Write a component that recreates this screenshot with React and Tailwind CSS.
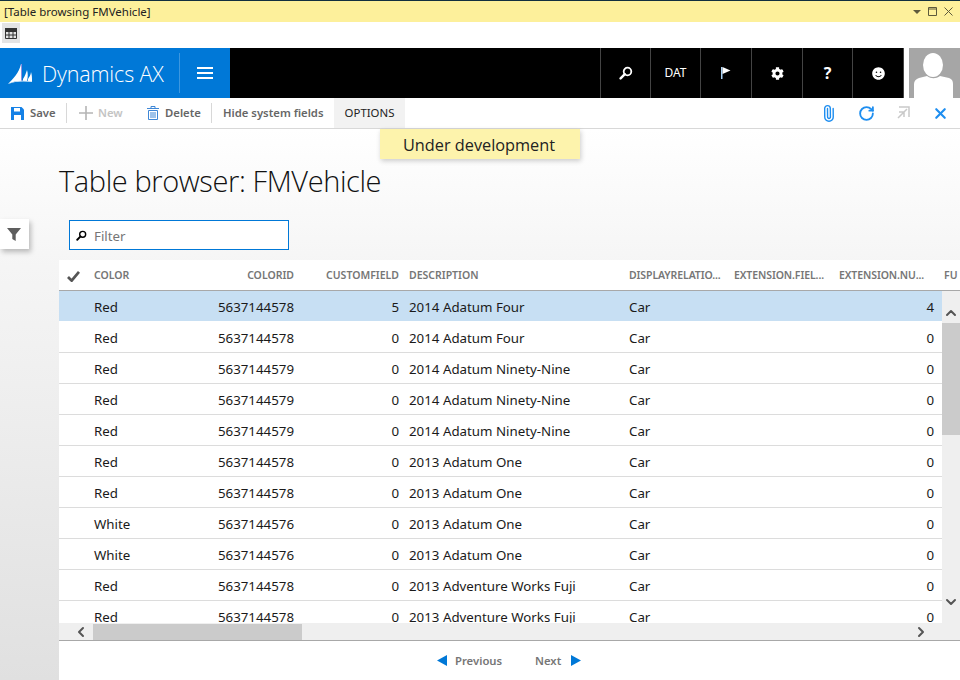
import React from "react";
import { Paperclip, RotateCw, X, ChevronUp, ChevronDown, ChevronLeft, ChevronRight } from "lucide-react";
import { FaCog, FaSmile } from "react-icons/fa";

const rows = [
  ["Red", "5637144578", "5", "2014 Adatum Four", "4"],
  ["Red", "5637144578", "0", "2014 Adatum Four", "0"],
  ["Red", "5637144579", "0", "2014 Adatum Ninety-Nine", "0"],
  ["Red", "5637144579", "0", "2014 Adatum Ninety-Nine", "0"],
  ["Red", "5637144579", "0", "2014 Adatum Ninety-Nine", "0"],
  ["Red", "5637144578", "0", "2013 Adatum One", "0"],
  ["Red", "5637144578", "0", "2013 Adatum One", "0"],
  ["White", "5637144576", "0", "2013 Adatum One", "0"],
  ["White", "5637144576", "0", "2013 Adatum One", "0"],
  ["Red", "5637144578", "0", "2013 Adventure Works Fuji", "0"],
  ["Red", "5637144578", "0", "2013 Adventure Works Fuji", "0"],
];

const Magnifier = ({ className }) => (
  <svg viewBox="0 0 14 14" className={className} fill="none" stroke="currentColor">
    <circle cx="8.5" cy="5.5" r="3.8" strokeWidth="1.8" />
    <path d="M5.8 8.2 1.6 12.4" strokeWidth="2.4" strokeLinecap="round" />
  </svg>
);

const NavCell = ({ width, children }) => (
  <div className={`${width} h-full flex items-center justify-center border-l border-[#444] text-white`}>
    {children}
  </div>
);

const App = () => {
  return (
    <div className="w-[960px] h-[680px] overflow-hidden relative flex flex-col bg-white text-[13.3px] text-[#1a1a1a] font-['Noto_Sans',sans-serif]">
      {/* Window title */}
      <div className="h-[22px] shrink-0 border-t border-[#12303f] bg-[#fdf09b] flex items-center justify-between pl-[4px] pr-[7px] text-[11.5px] text-[#222]">
        <span>[Table browsing FMVehicle]</span>
        <div className="flex items-center gap-[7px] text-[#5d5a3c]">
          <svg viewBox="0 0 8 4" className="w-[8px] h-[4px]"><path d="M0 0h8L4 4z" fill="currentColor" /></svg>
          <svg viewBox="0 0 9 9" className="w-[9px] h-[9px]" fill="none" stroke="currentColor"><path d="M.5.5h8v8h-8zM.5 2h8" /></svg>
          <svg viewBox="0 0 9 9" className="w-[9px] h-[9px]" fill="none" stroke="currentColor"><path d="M.5.5l8 8M8.5.5l-8 8" /></svg>
        </div>
      </div>

      {/* Small toolbar */}
      <div className="h-[26px] shrink-0 flex items-start">
        <div className="w-[18px] h-[20px] mt-px ml-[2px] bg-[#e4e4e4] flex items-center justify-center">
          <svg viewBox="0 0 12 11" className="w-[12px] h-[11px]" fill="none" stroke="#333"><path d="M.5.5h11v10H.5zM.5 3.5h11M.5 7h11M4 .5v10M8 .5v10" /><path d="M0 0h12v3H0z" fill="#333" stroke="none" /></svg>
        </div>
      </div>

      {/* Dynamics nav */}
      <div className="h-[50px] shrink-0 bg-black flex">
        <div className="w-[230px] bg-[#0078d7] flex items-center text-white">
          <svg viewBox="0 0 24 20" className="w-[24px] h-[20px] ml-[8px] mt-[2px]">
            <path d="M0 20C5 15 11 9 13 0v17C8 17 4 18 0 20z" fill="#fff" />
            <path d="M13 0h1v17h-1z" fill="#8d8fe0" />
            <path d="M15 15c2-3 3-6 4-9 1 3 1 7 0 11h-4z" fill="#fff" />
            <path d="M20 15c1-2 3-4 3-7 1 3 1 6 1 9h-4z" fill="#fff" />
            <path d="M0 20c7-4 16-4 24-3v1c-8-1-17-1-24 2z" fill="#d6e8f8" />
          </svg>
          <span className="ml-[10px] w-[122px] pt-[2px] whitespace-nowrap text-[21.5px] font-light font-['Open_Sans',sans-serif] tracking-[-0.15px]">Dynamics AX</span>
          <div className="w-px h-[40px] bg-[#3c97e0] ml-[15px]" />
          <div className="ml-[17px] flex flex-col gap-[3px]">
            <div className="w-[16px] h-[2px] bg-white" />
            <div className="w-[16px] h-[2px] bg-white" />
            <div className="w-[16px] h-[2px] bg-white" />
          </div>
        </div>
        <div className="flex-1" />
        <NavCell width="w-[50px]"><Magnifier className="w-[14px] h-[14px]" /></NavCell>
        <NavCell width="w-[50px]"><span className="text-[12px]">DAT</span></NavCell>
        <NavCell width="w-[51px]">
          <svg viewBox="0 0 10 12" className="w-[10px] h-[12px]"><path d="M0 0h1.5v12H0z" fill="#a9d2f5" /><path d="M1.5 0 9.5 3.5 1.5 7z" fill="#fff" /></svg>
        </NavCell>
        <NavCell width="w-[51px]"><FaCog className="w-[13px] h-[13px]" /></NavCell>
        <NavCell width="w-[50px]"><span className="text-[16px] leading-none font-bold">?</span></NavCell>
        <NavCell width="w-[51px]"><FaSmile className="w-[13px] h-[13px]" /></NavCell>
        <div className="w-[6px] bg-white border-l border-[#444]" />
        <div className="w-[51px] bg-[#a6a6a6] overflow-hidden">
          <svg viewBox="0 0 51 50" className="w-[51px] h-[50px]" fill="#fff">
            <ellipse cx="24" cy="17" rx="10" ry="12" />
            <path d="M5 50V36c0-3 2-5 5-6l8-2c4 3 9 3 13 0l9 2c3 1 4 3 4 6v14z" />
          </svg>
        </div>
      </div>

      {/* Action bar */}
      <div className="h-[31px] shrink-0 border-b border-[#d8d8d8] flex items-center font-semibold text-[11.3px] text-[#666]">
        <svg viewBox="0 0 13 13" className="w-[13px] h-[13px] ml-[11px]">
          <path d="M0 0h10.5L13 2.5V13H0z" fill="#1581e6" />
          <path d="M3 1h6v3.5H3z" fill="#fff" />
          <path d="M3 8h7v5H3z" fill="#fff" />
        </svg>
        <span className="ml-[6px] w-[26px]">Save</span>
        <div className="w-px h-[20px] bg-[#d8d8d8] ml-[10px]" />
        <svg viewBox="0 0 14 14" className="w-[14px] h-[14px] ml-[12px]"><path d="M6.2 0h1.6v6.2H14v1.6H7.8V14H6.2V7.8H0V6.2h6.2z" fill="#b5b5b5" /></svg>
        <span className="ml-[5px] w-[25px] text-[#c4c4c4]">New</span>
        <svg viewBox="0 0 12 14" className="w-[12px] h-[14px] ml-[24px]" fill="none" stroke="#3f87d6">
          <path d="M0 2.5h12M4 2.5V.5h4v2M1.5 4.5h9v9h-9zM4 6v6M6 6v6M8 6v6" />
        </svg>
        <span className="ml-[6px] w-[35px]">Delete</span>
        <div className="w-px h-[20px] bg-[#d8d8d8] ml-[11px]" />
        <span className="ml-[11px] w-[100px] whitespace-nowrap">Hide system fields</span>
        <div className="ml-[11px] w-[71px] h-full bg-[#f2f2f2] flex items-center justify-center font-normal text-[11.4px] text-[#222]">OPTIONS</div>
        <div className="flex-1" />
        <div className="flex items-center text-[#1e8ef0]">
          <Paperclip className="w-[17px] h-[17px] mr-[21px] -rotate-45" strokeWidth={2} />
          <RotateCw className="w-[17px] h-[17px] mr-[21px]" strokeWidth={2.6} />
          <svg viewBox="0 0 14 14" className="w-[14px] h-[14px] mr-[22px]" fill="none" stroke="#c9c9c9" strokeWidth="1.5">
            <path d="M3 1h10v10M11 3 2 12M3 6h5v5" />
          </svg>
          <X className="w-[17px] h-[17px] mr-[11px]" strokeWidth={3} />
        </div>
      </div>

      {/* Page body */}
      <div className="flex-1 min-h-0 flex bg-[linear-gradient(to_bottom,#ffffff,#f5f5f5_25%,#e0e0e0)]">
        {/* Left rail */}
        <div className="w-[59px] shrink-0 pt-[90px]">
          <div className="w-[29px] h-[30px] pr-[2px] bg-white shadow-[2px_3px_5px_rgba(0,0,0,0.25)] flex items-center justify-center">
            <svg viewBox="0 0 14 13" className="w-[14px] h-[13px]"><path d="M0 0h14L8.7 6.5V13L5.3 11V6.5z" fill="#5e5e5e" /></svg>
          </div>
        </div>

        <div className="flex-1 min-w-0 flex flex-col">
          <h1 className="h-[91px] pt-[30px] text-[29px] leading-[44px] font-light font-['Open_Sans',sans-serif] text-[#111] tracking-[-0.4px]">Table browser: FMVehicle</h1>

          <div className="ml-[10px] w-[220px] h-[30px] border border-[#0078d7] bg-white flex items-center pl-[6px] pt-[3px] gap-[7px] text-[#767676]">
            <Magnifier className="w-[11px] h-[11px] text-black -mt-[3px]" />
            <span>Filter</span>
          </div>

          {/* Grid header */}
          <div className="mt-[10px] h-[31px] shrink-0 bg-white border-b border-[#a8a8a8] flex items-center pt-[2px] font-semibold text-[10.5px] text-[#767676] whitespace-nowrap overflow-hidden">
            <div className="w-[35px] shrink-0 pl-[8px]">
              <svg viewBox="0 0 14 12" className="w-[13px] h-[11px]" fill="none" stroke="#555" strokeWidth="3"><path d="M1 6.5 5 10.5 13 1" /></svg>
            </div>
            <div className="w-[100px] shrink-0">COLOR</div>
            <div className="w-[100px] shrink-0 text-right">COLORID</div>
            <div className="w-[105px] shrink-0 text-right">CUSTOMFIELD</div>
            <div className="w-[220px] shrink-0 ml-[10px]">DESCRIPTION</div>
            <div className="w-[105px] shrink-0 tracking-[-0.1px]">DISPLAYRELATIO...</div>
            <div className="w-[105px] shrink-0 tracking-[-0.1px]">EXTENSION.FIEL...</div>
            <div className="w-[105px] shrink-0 tracking-[-0.1px]">EXTENSION.NU...</div>
            <div className="shrink-0">FU</div>
          </div>

          {/* Grid rows and vertical scrollbar */}
          <div className="h-[332px] shrink-0 flex bg-white">
            <div className="flex-1 min-w-0 overflow-hidden">
              {rows.map((row, i) => (
                <div
                  key={i}
                  className={`h-[31px] flex items-center pt-[3px] border-b whitespace-nowrap ${i === 0 ? "bg-[#c7dff3] border-white" : "border-[#dcdcdc]"}`}
                >
                  <div className="w-[35px] shrink-0" />
                  <div className="w-[100px] shrink-0">{row[0]}</div>
                  <div className="w-[100px] shrink-0 text-right">{row[1]}</div>
                  <div className="w-[105px] shrink-0 text-right">{row[2]}</div>
                  <div className="w-[220px] shrink-0 ml-[10px]">{row[3]}</div>
                  <div className="w-[105px] shrink-0">Car</div>
                  <div className="w-[105px] shrink-0" />
                  <div className="w-[95px] shrink-0 text-right">{row[4]}</div>
                </div>
              ))}
            </div>
            <div className="w-[18px] shrink-0 bg-[#efefef] flex flex-col items-center">
              <ChevronUp className="w-[16px] h-[16px] mt-[14px] text-[#555]" strokeWidth={3} />
              <div className="w-full h-[112px] bg-[#cbcbcb] mt-[2px]" />
              <div className="flex-1" />
              <ChevronDown className="w-[16px] h-[16px] mb-[13px] text-[#555]" strokeWidth={3} />
            </div>
          </div>

          {/* Horizontal scrollbar */}
          <div className="h-[18px] shrink-0 bg-[#efefef] border-b border-[#a8a8a8] flex items-center">
            <ChevronLeft className="w-[16px] h-[16px] ml-[14px] text-[#555]" strokeWidth={3} />
            <div className="w-[209px] h-[16px] bg-[#cbcbcb] ml-[4px]" />
            <div className="flex-1" />
            <ChevronRight className="w-[16px] h-[16px] mr-[31px] text-[#555]" strokeWidth={3} />
          </div>

          {/* Paging */}
          <div className="flex-1 bg-white flex items-center font-semibold text-[11.3px] text-[#767676] pl-[378px] pt-[2px]">
            <svg viewBox="0 0 10 11" className="w-[10px] h-[11px] -mt-[2px]"><path d="M10 0v11L0 5.5z" fill="#0078d7" /></svg>
            <span className="ml-[8px] w-[47px]">Previous</span>
            <span className="ml-[33px] w-[26px]">Next</span>
            <svg viewBox="0 0 10 11" className="w-[10px] h-[11px] ml-[10px] -mt-[2px]"><path d="M0 0v11l10-5.5z" fill="#0078d7" /></svg>
          </div>
        </div>
      </div>

      {/* Tooltip over the page */}
      <div className="absolute left-[380px] top-[129px] w-[200px] h-[30px] pt-[2px] pr-[2px] bg-[#fdf3ac] shadow-[1px_2px_5px_rgba(0,0,0,0.2)] flex items-center justify-center text-[16.3px] font-['Open_Sans',sans-serif] text-[#222]">
        Under development
      </div>
    </div>
  );
};

export default App;
